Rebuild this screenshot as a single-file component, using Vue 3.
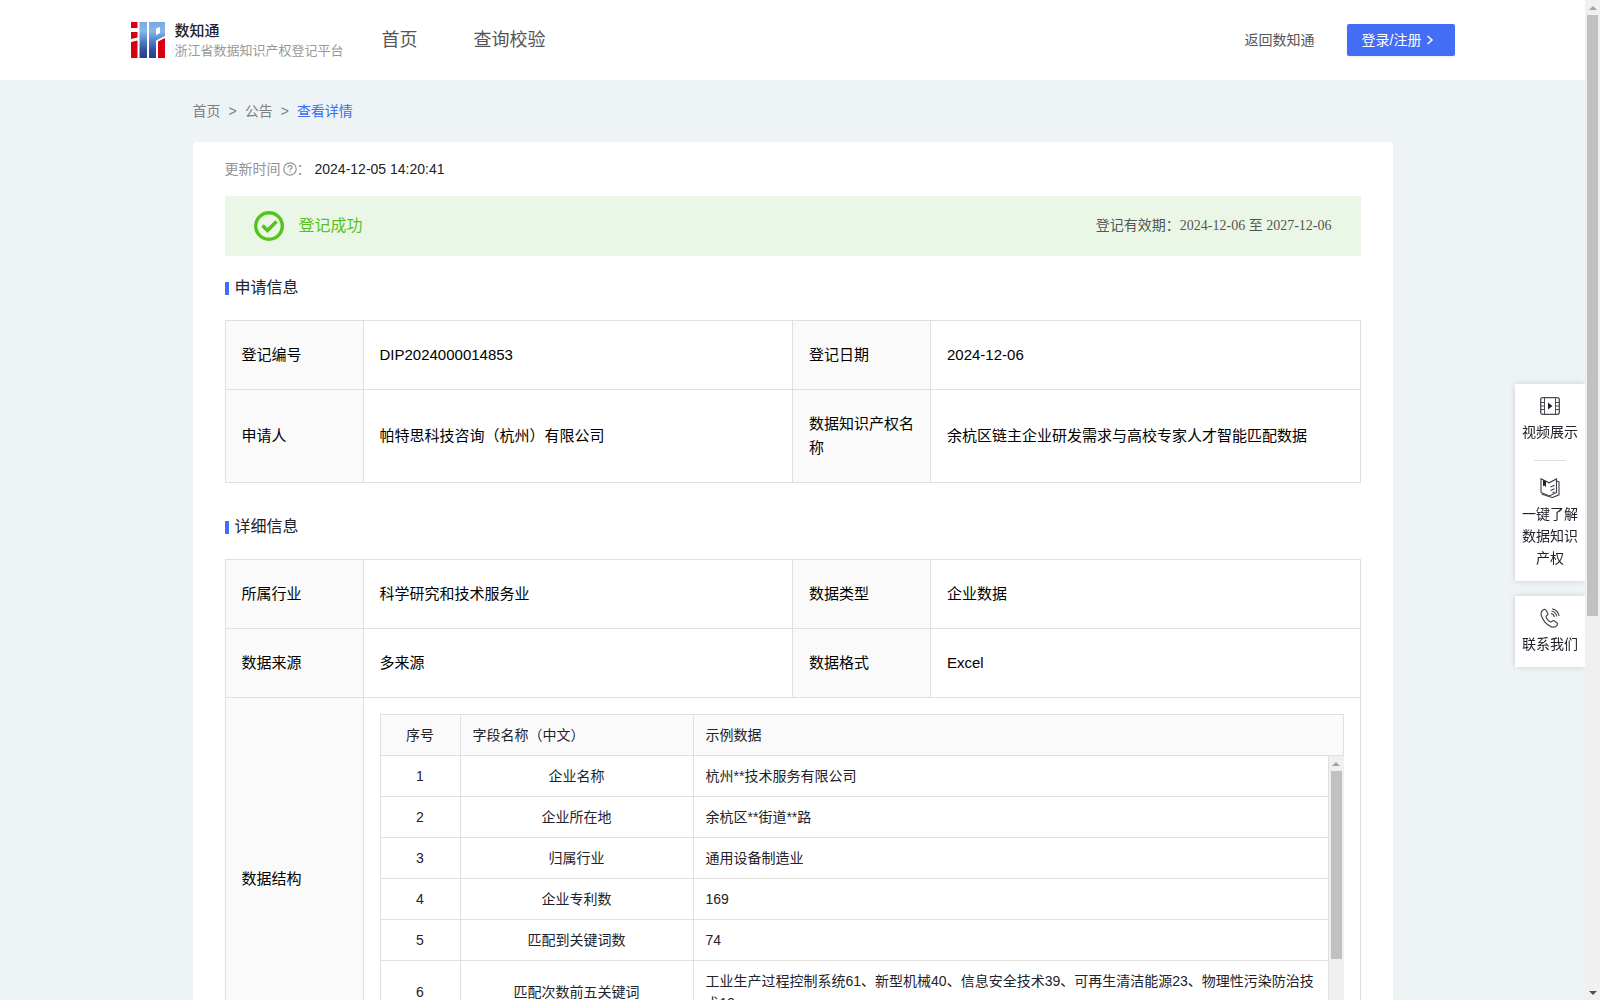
<script setup>
const applyRows = [
  ['登记编号', 'DIP2024000014853', '登记日期', '2024-12-06'],
  ['申请人', '帕特思科技咨询（杭州）有限公司', '数据知识产权名称', '余杭区链主企业研发需求与高校专家人才智能匹配数据'],
]

const detailRows = [
  ['所属行业', '科学研究和技术服务业', '数据类型', '企业数据'],
  ['数据来源', '多来源', '数据格式', 'Excel'],
]

const fields = [
  { name: '企业名称', sample: '杭州**技术服务有限公司' },
  { name: '企业所在地', sample: '余杭区**街道**路' },
  { name: '归属行业', sample: '通用设备制造业' },
  { name: '企业专利数', sample: '169' },
  { name: '匹配到关键词数', sample: '74' },
  { name: '匹配次数前五关键词', sample: '工业生产过程控制系统61、新型机械40、信息安全技术39、可再生清洁能源23、物理性污染防治技术19' },
]
</script>

<template>
  <div class="shell">
    <div class="page">
      <header class="header">
        <div class="header-inner">
          <a class="brand" href="#">
            <svg class="logo" viewBox="0 0 34 36" aria-hidden="true">
              <defs>
                <linearGradient id="logo-blue" x1="0" y1="0" x2="0" y2="1">
                  <stop offset="0" stop-color="#7aa9de" />
                  <stop offset="0.25" stop-color="#85b8ea" />
                  <stop offset="0.5" stop-color="#5585cb" />
                  <stop offset="0.8" stop-color="#2f4f9c" />
                  <stop offset="1" stop-color="#27408b" />
                </linearGradient>
              </defs>
              <path fill="#d8000f" d="M0 0h6.500v6H0zM0 10h6.500v5.500L0 17zM0 20l6.500-1.500V36H0z" />
              <path fill="url(#logo-blue)" d="M8.500 0H16v36H8.500zM18 0h16v14l-9 4.500V36H18z" />
              <path fill="#fff" d="M25 6.500l4-1.500v6l-4 2z" />
              <path fill="#d8000f" d="M27 19.500l7-3.500v20h-7z" />
            </svg>
            <span class="brand-text">
              <strong>数知通</strong>
              <small>浙江省数据知识产权登记平台</small>
            </span>
          </a>
          <nav class="nav">
            <a href="#">首页</a>
            <a href="#">查询校验</a>
          </nav>
          <a class="back" href="#">返回数知通</a>
          <button class="login" type="button">
            登录/注册
            <svg viewBox="0 0 8 10" width="8" height="10" aria-hidden="true">
              <path d="M1.500 1l4.500 4-4.500 4" fill="none" stroke="#fff" stroke-width="1.500" />
            </svg>
          </button>
        </div>
      </header>

      <main class="container">
        <nav class="crumbs">
          <a href="#">首页</a><span>&gt;</span><a href="#">公告</a><span>&gt;</span><a class="current" href="#">查看详情</a>
        </nav>

        <section class="card">
          <p class="updated">
            <span>更新时间</span>
            <svg viewBox="0 0 14 14" width="14" height="14" aria-hidden="true">
              <circle cx="7" cy="7" r="6.200" fill="none" stroke="#909399" stroke-width="1.200" />
              <path d="M5 5.600C5 4.400 5.900 3.700 7 3.700s2 .7 2 1.700c0 1.300-2 1.400-2 2.800M7 9.300v1.200" fill="none" stroke="#909399" stroke-width="1.200" />
            </svg>
            <span class="colon">：</span>
            <time>2024-12-05 14:20:41</time>
          </p>

          <div class="banner">
            <svg viewBox="0 0 30 30" width="30" height="30" aria-hidden="true">
              <circle cx="15" cy="15" r="13.300" fill="none" stroke="#52c41a" stroke-width="3.400" />
              <path d="M8.500 14.500l5 5 9-9" fill="none" stroke="#52c41a" stroke-width="3.600" />
            </svg>
            <span class="status">登记成功</span>
            <span class="validity">登记有效期：2024-12-06 至 2027-12-06</span>
          </div>

          <h2>申请信息</h2>
          <table class="info">
            <colgroup><col class="label-col"><col><col class="label-col"><col></colgroup>
            <tbody>
              <tr v-for="row in applyRows" :key="row[0]">
                <th scope="row">{{ row[0] }}</th>
                <td>{{ row[1] }}</td>
                <th scope="row">{{ row[2] }}</th>
                <td>{{ row[3] }}</td>
              </tr>
            </tbody>
          </table>

          <h2>详细信息</h2>
          <table class="info">
            <colgroup><col class="label-col"><col><col class="label-col"><col></colgroup>
            <tbody>
              <tr v-for="row in detailRows" :key="row[0]">
                <th scope="row">{{ row[0] }}</th>
                <td>{{ row[1] }}</td>
                <th scope="row">{{ row[2] }}</th>
                <td>{{ row[3] }}</td>
              </tr>
              <tr>
                <th scope="row">数据结构</th>
                <td class="nested" colspan="3">
                  <table class="fields">
                    <colgroup><col class="no-col"><col class="name-col"><col></colgroup>
                    <thead>
                      <tr><th class="center" scope="col">序号</th><th scope="col">字段名称（中文）</th><th scope="col">示例数据</th></tr>
                    </thead>
                  </table>
                  <div class="fields-body">
                    <div class="fields-scroll">
                      <table class="fields">
                        <colgroup><col class="no-col"><col class="name-col"><col></colgroup>
                        <tbody>
                          <tr v-for="(field, i) in fields" :key="field.name">
                            <td class="center">{{ i + 1 }}</td>
                            <td class="center">{{ field.name }}</td>
                            <td>{{ field.sample }}</td>
                          </tr>
                        </tbody>
                      </table>
                    </div>
                    <div class="scrollbar inner-bar" aria-hidden="true">
                      <i class="arrow up"></i>
                      <div class="track"><div class="thumb"></div></div>
                      <i class="arrow down"></i>
                    </div>
                  </div>
                </td>
              </tr>
            </tbody>
          </table>
        </section>
      </main>
    </div>

    <div class="scrollbar page-bar" aria-hidden="true">
      <i class="arrow up"></i>
      <div class="track"><div class="thumb"></div></div>
      <i class="arrow down"></i>
    </div>

    <aside class="side">
      <div class="side-card">
        <a href="#">
          <svg viewBox="0 0 20 20" width="20" height="20" fill="none" stroke="#4a4a55" aria-hidden="true">
            <rect x="0.700" y="1.700" width="18.600" height="16.600" rx="2" stroke-width="1.300" />
            <path d="M4.500 2v16M15.500 2v16M1 6.500h3.500M1 13.500h3.500M15.500 6.500H19M15.500 13.500H19M1 10h3.500M15.500 10H19" />
            <path d="M8 6.500l4.500 3.500L8 13.500z" fill="#22222c" stroke="none" />
          </svg>
          视频展示
        </a>
        <hr>
        <a href="#">
          <svg viewBox="0 0 20 20" width="20" height="20" fill="none" stroke="#3c3c46" stroke-width="1.100" aria-hidden="true">
            <path d="M1 .8l8 4L16.500 1v13.500L9.500 18 1 14.500z" />
            <path d="M16.500 3l2.500.8v13L12.500 19.500l-3-.8L1.500 16M10.500 9l4-1.800M10.500 12.500l4-1.800M12.500 14.800l2-.9" />
            <path d="M3 1.800l3 1.500v6L4.500 7.500 3 8.200z" fill="#22222c" stroke="none" />
          </svg>
          一键了解数据知识产权
        </a>
      </div>
      <div class="side-card">
        <a href="#">
          <svg viewBox="0 0 20 20" width="20" height="20" fill="none" stroke="#4a4a55" stroke-width="1.200" aria-hidden="true">
            <path d="M3 2C1 3.500.6 5.500 1.500 8c1.700 4.800 5 8.700 9.500 10.600 2.500 1 4.600.7 6-1.300.9-1.200.5-2.200-.5-2.900l-2-1.400c-1-.7-1.900-.5-2.700.3-.8.900-1.500.8-2.400.1-1.400-1.100-2.500-2.500-3.200-4-.4-.9-.2-1.400.6-2C7.900 6.700 8.200 6 7.600 5L6.200 2.500C5.500 1.200 4.300 1.100 3 2z" />
            <path d="M11 5.500c2 .4 3 1.500 3.300 3.500M11.500 3c3 .6 4.700 2.500 5.200 5.500M12.200.8c3.900.8 6.200 3.200 6.900 7.200" />
          </svg>
          联系我们
        </a>
      </div>
    </aside>
  </div>
</template>

<style>
body {
  margin: 0;
}
</style>

<style scoped>
.shell {
  display: flex;
  height: 100vh;
  overflow: hidden;
  font-family: "Liberation Sans", "Noto Sans CJK SC", sans-serif;
  font-size: 14px;
  line-height: 22px;
  color: #22222c;
}

.page {
  flex: 1;
  min-width: 0;
  overflow-y: auto;
  scrollbar-width: none;
  background: #eef3f6;
}

a {
  color: inherit;
  text-decoration: none;
}

.header {
  background: #fff;
}

.header-inner {
  display: flex;
  align-items: center;
  max-width: 1324px;
  height: 80px;
  margin: 0 auto;
}

.brand {
  display: flex;
  align-items: center;
  gap: 10px;
}

.logo {
  width: 34px;
  height: 36px;
}

.brand-text {
  display: flex;
  flex-direction: column;
  padding-top: 2px;
}

.brand-text strong {
  font-size: 15px;
  line-height: 20px;
  font-weight: 500;
}

.brand-text small {
  font-size: 13px;
  line-height: 20px;
  color: #999;
}

.nav {
  display: flex;
  gap: 56px;
  margin-left: 38px;
  font-size: 18px;
  color: #555;
}

.back {
  margin-left: auto;
  color: #555;
}

.login {
  display: flex;
  align-items: center;
  gap: 5px;
  width: 108px;
  height: 32px;
  margin-left: 32px;
  padding: 0 15px;
  border: 0;
  border-radius: 2px;
  background: #446df6;
  box-shadow: 0 2px 2px rgba(0, 0, 0, 0.06);
  color: #fff;
  font: inherit;
  white-space: nowrap;
}

.container {
  max-width: 1200px;
  margin: 0 auto;
  padding-bottom: 500px;
}

.crumbs {
  display: flex;
  gap: 8px;
  padding: 20px 0;
  color: #808080;
}

.crumbs .current {
  color: #3a6cf6;
}

.card {
  padding: 16px 32px 32px;
  border-radius: 4px;
  background: #fff;
}

.updated {
  display: flex;
  align-items: center;
  margin: 0 0 16px;
  color: #909399;
}

.updated svg {
  margin-left: 2px;
}

.updated .colon {
  width: 18px;
}

.updated time {
  color: #22222c;
}

.banner {
  display: flex;
  align-items: center;
  height: 60px;
  padding: 0 29px;
  background: #ebf7e6;
}

.status {
  margin-left: 15px;
  font-size: 16px;
  color: #52c41a;
}

.validity {
  margin-left: auto;
  font-family: "Liberation Serif", "Noto Sans CJK SC", serif;
  color: #555;
}

h2 {
  display: flex;
  align-items: center;
  gap: 6px;
  margin: 20px 0;
  font-size: 16px;
  line-height: 24px;
  font-weight: 400;
}

h2::before {
  content: "";
  width: 4px;
  height: 13px;
  background: #446df6;
}

.info + h2 {
  margin-top: 32px;
}

table {
  width: 100%;
  border-spacing: 0;
  border-collapse: collapse;
  table-layout: fixed;
}

th,
td {
  border: 1px solid #e0e0e0;
  text-align: left;
  font-weight: 400;
}

th {
  background: #fafafa;
}

.info {
  font-size: 15px;
  line-height: 24px;
  color: #000;
}

.info th,
.info td {
  padding: 22px 16px;
}

.label-col {
  width: 138px;
}

.info .nested {
  padding: 16px;
}

.fields {
  font-size: 14px;
  line-height: 22px;
  color: #22222c;
}

.info .fields th,
.info .fields td {
  padding: 9px 12px;
}

.info .fields .center {
  text-align: center;
}

.no-col {
  width: 80px;
}

.name-col {
  width: 233px;
}

.fields-body {
  display: flex;
  height: 287px;
}

.fields-scroll {
  flex: 1;
  min-width: 0;
  overflow-y: auto;
  scrollbar-width: none;
}

.fields-scroll .fields {
  margin-bottom: 124px;
}

.fields-scroll tr:first-child td {
  border-top: 0;
}

.scrollbar {
  display: flex;
  flex-direction: column;
  flex: none;
  width: 15px;
  background: #f0f0f0;
}

.track {
  flex: 1;
  padding: 0 2px;
}

.thumb {
  background: #c1c1c1;
}

.page-bar .thumb {
  height: 62%;
}

.inner-bar .thumb {
  height: 73%;
}

.arrow {
  display: flex;
  align-items: center;
  justify-content: center;
  height: 15px;
}

.arrow::before {
  content: "";
  border: 4px solid transparent;
}

.arrow.up::before {
  border-top: 0;
  border-bottom-color: #a3a3a3;
}

.arrow.down::before {
  border-bottom: 0;
  border-top-color: #505050;
}

.side {
  position: fixed;
  top: 384px;
  right: 15px;
  display: flex;
  flex-direction: column;
  gap: 15px;
  width: 70px;
  clip-path: inset(-10px 0 -10px -10px);
}

.side-card {
  padding: 12px 7px;
  background: #fff;
  box-shadow: 0 0 6px rgba(0, 0, 0, 0.15);
}

.side-card a {
  display: flex;
  flex-direction: column;
  align-items: center;
  gap: 5px;
  text-align: center;
}

.side-card hr {
  width: 32px;
  height: 1px;
  margin: 17px auto;
  border: 0;
  background: #e0e0e0;
}
</style>
